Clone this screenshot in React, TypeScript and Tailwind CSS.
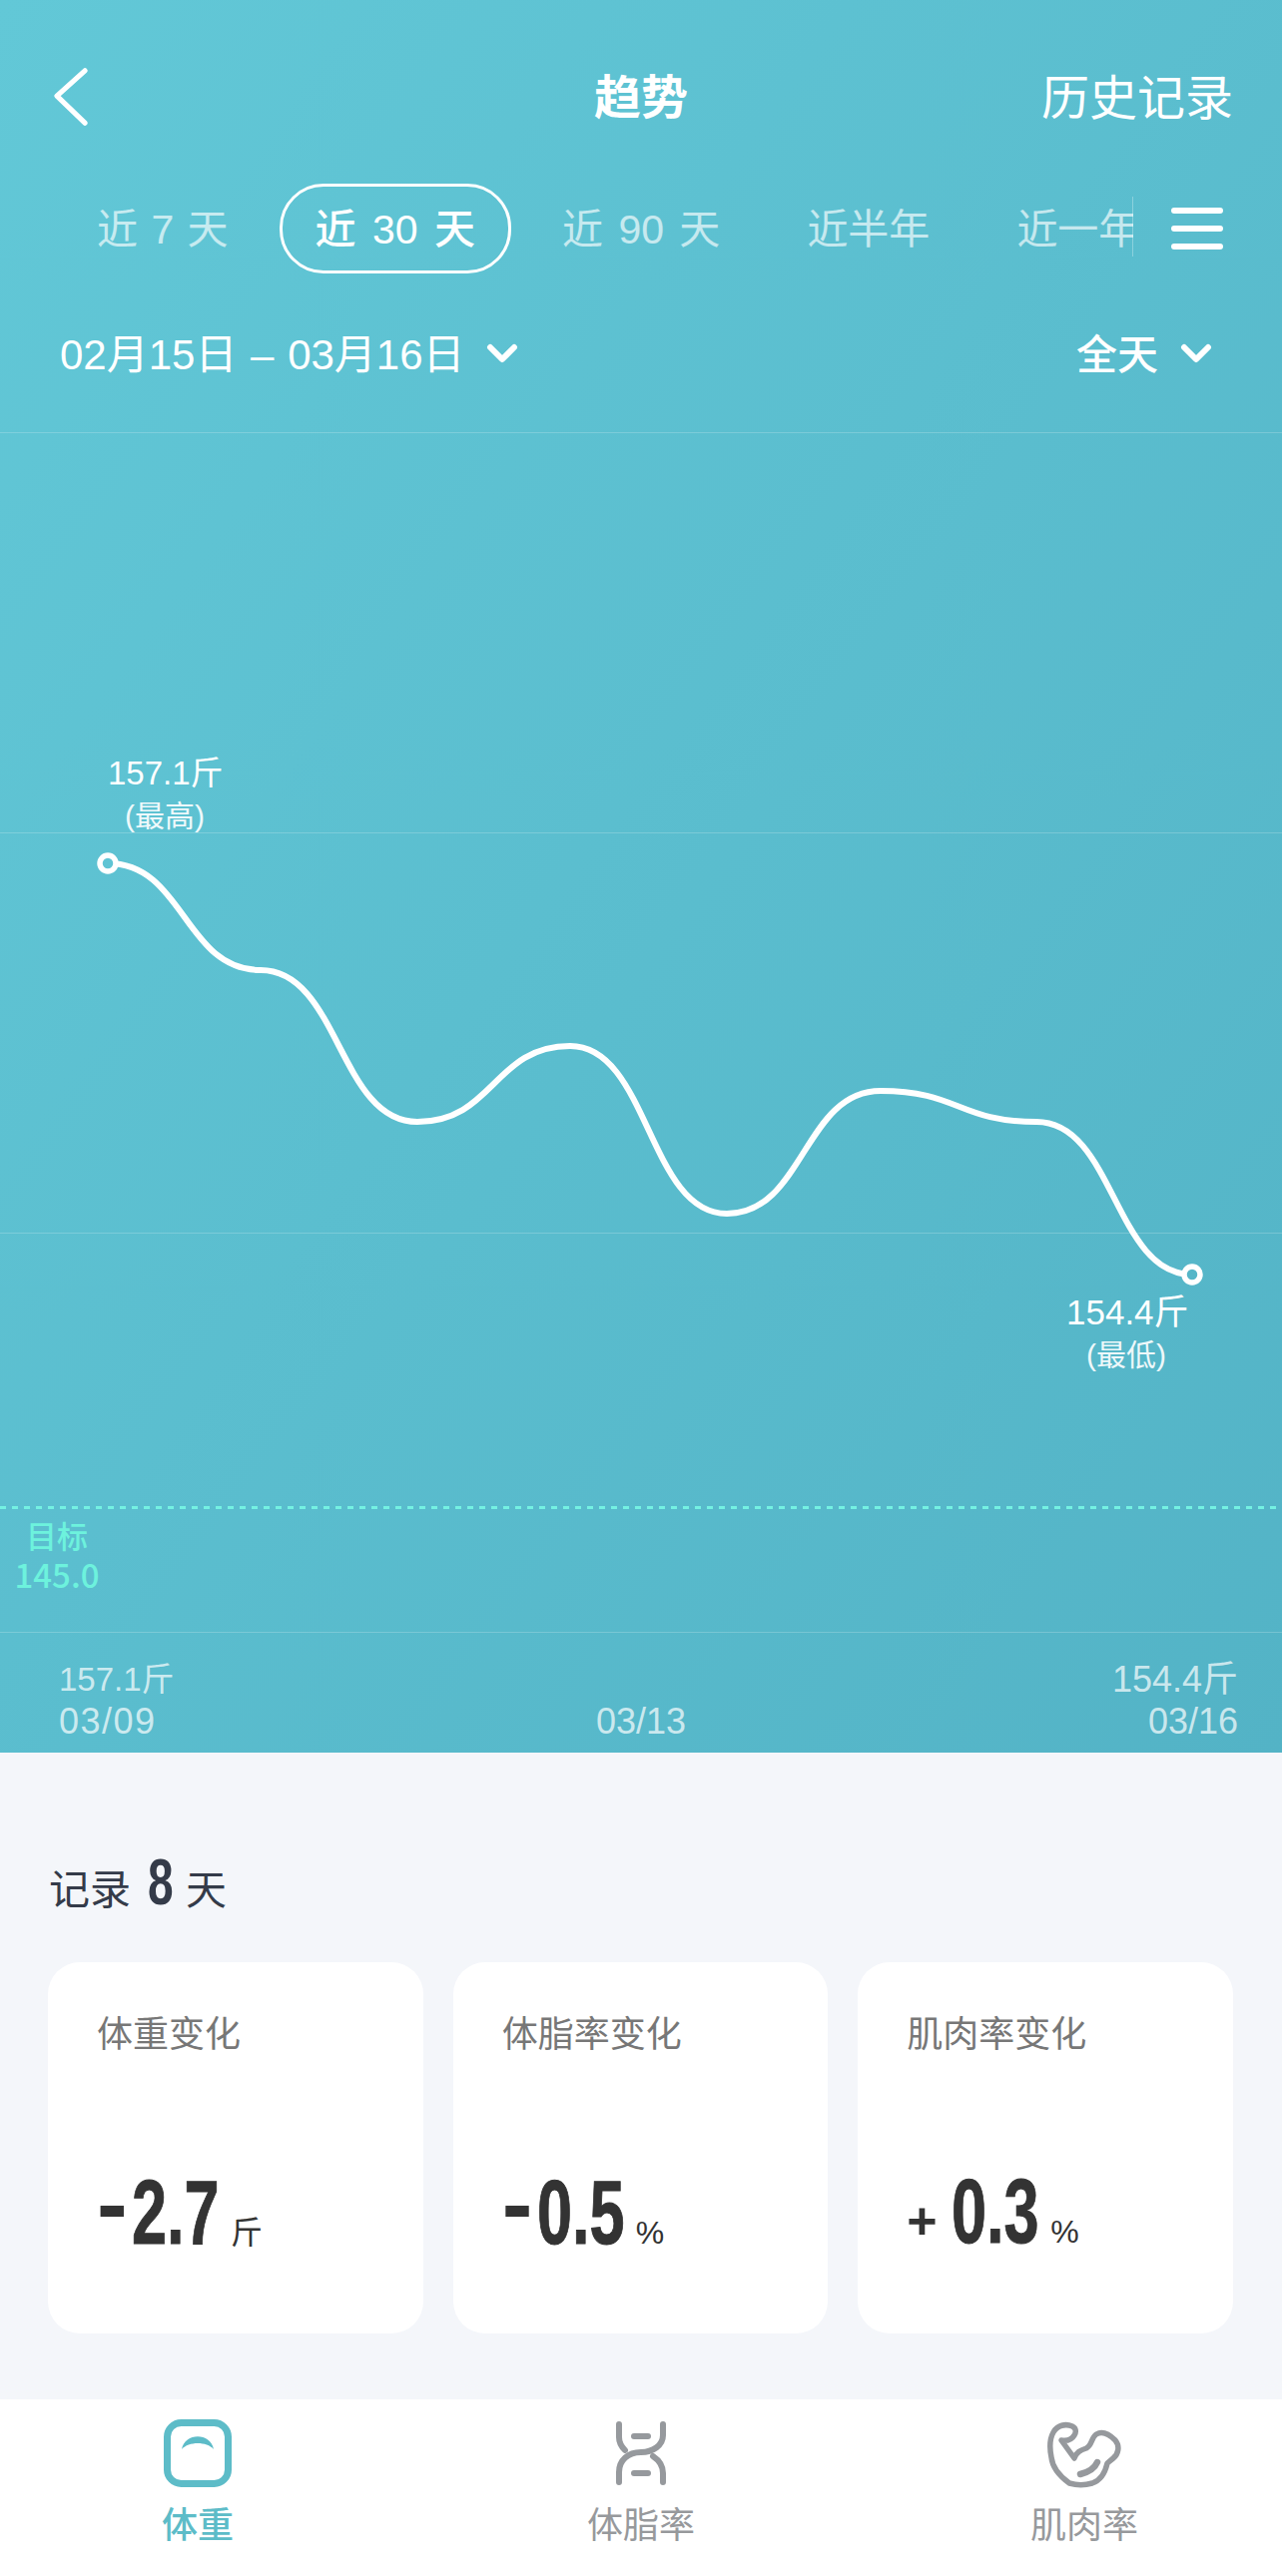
const TABS = [
  { label: '近 7 天', active: false, spacing: '[word-spacing:2px]' },
  { label: '近 30 天', active: true, spacing: '[word-spacing:5px]' },
  { label: '近 90 天', active: false, spacing: '[word-spacing:4px]' },
  { label: '近半年', active: false, spacing: '' },
  { label: '近一年', active: false, spacing: '' },
]

const CARDS = [
  { title: '体重变化', sign: '-', value: '2.7', unit: '斤', plus: false },
  { title: '体脂率变化', sign: '-', value: '0.5', unit: '%', plus: false },
  { title: '肌肉率变化', sign: '+', value: '0.3', unit: '%', plus: true },
]

// 曲线坐标，相对图表区左上角
const POINTS = [
  [108, 432],
  [261, 539],
  [418, 691],
  [571, 615],
  [728, 783],
  [882, 660],
  [1038, 691],
  [1194, 844],
]

function curvePath() {
  let d = `M${POINTS[0][0]} ${POINTS[0][1]}`
  for (let i = 1; i < POINTS.length; i++) {
    const [x0, y0] = POINTS[i - 1]
    const [x1, y1] = POINTS[i]
    const mid = (x0 + x1) / 2
    d += ` C${mid} ${y0} ${mid} ${y1} ${x1} ${y1}`
  }
  return d
}

function Chevron({ className }: { className: string }) {
  return (
    <svg viewBox="0 0 32 20" className={className} fill="none" stroke="currentColor" strokeWidth="6" strokeLinecap="round" strokeLinejoin="round">
      <path d="M4 4 L16 16 L28 4" />
    </svg>
  )
}

function Tab({ label, active, spacing }: { label: string; active: boolean; spacing: string }) {
  return (
    <div
      className={`shrink-0 h-[90px] px-[33px] pt-[2px] flex items-center whitespace-nowrap rounded-[44px] text-[41px] leading-none border-[3px] ${spacing} ${
        active ? 'border-white text-white font-medium' : 'border-transparent text-white/65'
      }`}
    >
      {label}
    </div>
  )
}

function ScaleIcon() {
  return (
    <svg viewBox="0 0 68 68" className="w-[68px] h-[68px]" fill="none">
      <rect x="3.5" y="3.5" width="61" height="61" rx="14" stroke="#5dbcc8" strokeWidth="7" />
      <path d="M18 30 C21 13 47 13 50 30 C43 22 25 22 18 30 Z" fill="#5dbcc8" />
    </svg>
  )
}

function DnaIcon() {
  return (
    <svg viewBox="0 0 56 68" className="w-[56px] h-[68px]" fill="none" stroke="#96999d" strokeWidth="6" strokeLinecap="round" strokeLinejoin="round">
      <path d="M6 5 V18 C6 24 8 27 12 31" />
      <path d="M50 5 V16 C50 26 40 33 28 33 C15 33 6 41 6 53 V63" />
      <path d="M40 37 C46 41 50 47 50 54 V63" />
      <path d="M21 17 H35" />
      <path d="M21 54 H35" />
    </svg>
  )
}

function MuscleIcon() {
  return (
    <svg viewBox="0 0 92 72" className="w-[92px] h-[72px]" fill="none" stroke="#96999d" strokeWidth="5.5" strokeLinecap="round" strokeLinejoin="round">
      <path d="M31 66 C20 58 14 50 13 40 C11 30 11 22 15 15 C19 8 27 6 34 9 C38 11 38 15 36 18 C33 23 29 24 23 23 L36 41 C38 35 42 33 48 31 C54 28 53 20 58 17 C65 13 72 18 77 23 C82 29 80 37 75 41 L69 46 C67 55 63 63 54 66 C47 68 38 68 31 66 Z" />
      <path d="M42 57 C50 55 56 52 59 45" strokeWidth="6.5" />
    </svg>
  )
}

function TabBarItem({ icon, label, active }: { icon: React.ReactNode; label: string; active?: boolean }) {
  return (
    <div className="flex flex-col items-center">
      <div className="h-[68px] flex items-center justify-center">{icon}</div>
      <div className={`mt-[19px] text-[36px] leading-[40px] ${active ? 'text-[#5dbcc8] font-medium' : 'text-[#97999c]'}`}>{label}</div>
    </div>
  )
}

export default function App() {
  return (
    <div className="w-[1284px] min-h-[2581px] flex flex-col bg-[#f4f6fa] font-['Liberation_Sans','Noto_Sans_CJK_SC',sans-serif]">
      <section className="h-[1756px] shrink-0 flex flex-col text-white bg-gradient-to-br from-[#62c8d7] to-[#53b3c6]">
        {/* 顶部导航 */}
        <div className="mt-[68px] h-[58px] relative flex items-center justify-between pl-[53px] pr-[49px]">
          <svg viewBox="0 0 38 62" className="w-[36px] h-[58px]" fill="none" stroke="currentColor" strokeWidth="5.5" strokeLinecap="round" strokeLinejoin="round">
            <path d="M34 3 L4 30 L34 59" />
          </svg>
          <div className="absolute left-[595px] top-[1px] text-[47px] leading-[58px] font-bold">趋势</div>
          <div className="pt-[4px] text-[48px] leading-[58px]">历史记录</div>
        </div>

        {/* 时间范围 */}
        <div className="mt-[58px] h-[90px] flex items-center">
          <div className="relative w-[1135px] pl-[61px] flex gap-[15px] overflow-hidden">
            {TABS.map((t) => (
              <Tab key={t.label} label={t.label} active={t.active} spacing={t.spacing} />
            ))}
            <div className="absolute right-0 top-[13px] h-[60px] w-px bg-white/30" />
          </div>
          <div className="ml-[38px] w-[52px] flex flex-col gap-[12px]">
            <div className="h-[6px] rounded-full bg-white" />
            <div className="h-[6px] rounded-full bg-white" />
            <div className="h-[6px] rounded-full bg-white" />
          </div>
        </div>

        <div className="mt-[57px] h-[50px] flex items-center justify-between pl-[60px] pr-[70px]">
          <div className="flex items-center gap-[21px]">
            <span className="text-[42px] leading-[50px] whitespace-nowrap [word-spacing:2px]">02月15日 – 03月16日</span>
            <Chevron className="w-[32px] h-[20px] mb-[4px]" />
          </div>
          <div className="flex items-center gap-[22px]">
            <span className="text-[41px] leading-[50px] font-medium">全天</span>
            <Chevron className="w-[32px] h-[20px] mb-[4px]" />
          </div>
        </div>

        {/* 图表 */}
        <div className="mt-[52px] relative h-[1203px] shrink-0">
          <div className="h-[401px] border-t border-white/20" />
          <div className="h-[401px] border-t border-white/20" />
          <div className="h-[401px] border-t border-b border-white/20" />

          <svg viewBox="0 0 1284 1203" className="absolute inset-0 w-[1284px] h-[1203px]" fill="none">
            <path d={curvePath()} stroke="#fff" strokeWidth="6" strokeLinecap="round" />
            <circle cx="108" cy="432" r="8" stroke="#fff" strokeWidth="5.5" fill="#5fc4d4" />
            <circle cx="1194" cy="844" r="8" stroke="#fff" strokeWidth="5.5" fill="#55b6c8" />
          </svg>

          <div className="absolute left-[108px] top-[320px] h-[81px] overflow-hidden">
            <div className="text-[33px] leading-[44px] whitespace-nowrap">157.1斤</div>
            <div className="mt-[3px] ml-[17px] text-[30px] leading-[36px] text-white/90 whitespace-nowrap">(最高)</div>
          </div>

          <div className="absolute left-[1068px] top-[860px]">
            <div className="text-[35px] leading-[44px] whitespace-nowrap">154.4斤</div>
            <div className="mt-[3px] ml-[20px] text-[30px] leading-[36px] text-white/90 whitespace-nowrap">(最低)</div>
          </div>

          {/* 目标线 */}
          <div className="absolute left-0 right-0 top-[1076px] h-[3px] bg-[repeating-linear-gradient(90deg,#74f1e2_0_6px,transparent_6px_12px)]" />
          <div className="absolute left-[8px] top-[1085px] w-[98px] text-center text-[#6df2dd] font-medium font-['Noto_Sans_CJK_SC','Noto_Sans',sans-serif]">
            <div className="text-[31px] leading-[40px]">目标</div>
            <div className="text-[33px] leading-[38px]">145.0</div>
          </div>
        </div>

        {/* 横轴 */}
        <div className="mt-[26px] grid grid-cols-[1fr_auto_1fr] items-end pl-[59px] pr-[44px] text-white/70 text-[36px] leading-[42px]">
          <div>
            <div className="text-[33px]">157.1斤</div>
            <div className="tracking-[1.5px]">03/09</div>
          </div>
          <div className="mr-[15px]">03/13</div>
          <div className="text-right">
            <div>154.4斤</div>
            <div>03/16</div>
          </div>
        </div>
      </section>

      {/* 统计 */}
      <section className="flex-1 pl-[48px] pr-[49px] pt-[82px]">
        <div className="h-[70px] pl-[1px] flex items-baseline text-[#343b49] text-[41px]">
          <span>记录</span>
          <span className="ml-[17px] w-[38px] inline-block">
            <span className="inline-block origin-left scale-x-[.72] text-[64px] font-bold">8</span>
          </span>
          <span>天</span>
        </div>
        <div className="mt-[58px] grid grid-cols-3 gap-[30px]">
          {CARDS.map((c) => (
            <div key={c.title} className="h-[372px] rounded-[32px] bg-white pl-[49px] pt-[48px]">
              <div className="text-[36px] leading-[50px] text-[#777]">{c.title}</div>
              <div className="mt-[102px] flex items-baseline text-[#333]">
                {c.plus ? (
                  <span className="w-[45px] text-[52px] font-bold leading-[100px] -translate-y-[4px]">+</span>
                ) : (
                  <span className="w-[35px] text-[92px] font-bold leading-[100px] -translate-y-[8px]">-</span>
                )}
                <span className="w-[99px] inline-block">
                  <span className="inline-block origin-left scale-x-[.7] text-[90px] font-bold leading-[100px] whitespace-nowrap [-webkit-text-stroke:1px_#333]">{c.value}</span>
                </span>
                <span className="text-[32px] leading-none">{c.unit}</span>
              </div>
            </div>
          ))}
        </div>
      </section>

      {/* 底部 Tab */}
      <nav className="h-[177px] shrink-0 bg-white pt-[20px] grid grid-cols-[396px_1fr_396px]">
        <TabBarItem icon={<ScaleIcon />} label="体重" active />
        <TabBarItem icon={<DnaIcon />} label="体脂率" />
        <TabBarItem icon={<MuscleIcon />} label="肌肉率" />
      </nav>
    </div>
  )
}
